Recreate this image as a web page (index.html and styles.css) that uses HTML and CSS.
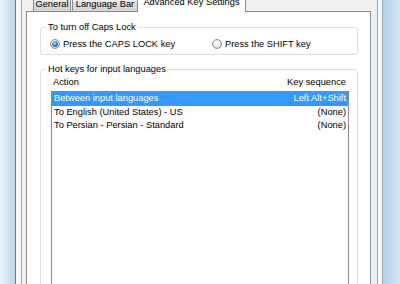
FILE: index.html
```html
<!DOCTYPE html>
<html lang="en">
<head>
  <meta charset="UTF-8">
  <meta name="viewport" content="width=device-width, initial-scale=1.0">
  <title>Text Services and Input Languages</title>
  <link rel="stylesheet" href="styles.css">
</head>
<body>
  <div class="desk-left"></div>
  <div class="window">
    <div class="dialog">
      <!-- Tabs -->
      <div class="tabs">
        <div class="tab tab-general">General</div>
        <div class="tab tab-lang">Language Bar</div>
        <div class="tab tab-active">Advanced Key Settings</div>
      </div>

      <div class="panel">
        <!-- Caps Lock -->
        <fieldset class="group">
          <legend>To turn off Caps Lock</legend>
          <div class="group-body caps">
            <label class="option"><span class="radio on"></span>Press the CAPS LOCK key</label>
            <label class="option"><span class="radio"></span>Press the SHIFT key</label>
          </div>
        </fieldset>

        <!-- Hot keys -->
        <fieldset class="group group-hotkeys">
          <legend>Hot keys for input languages</legend>
          <div class="group-body hotkeys">
            <div class="cols">
              <span>Action</span>
              <span>Key sequence</span>
            </div>
            <div class="listbox">
              <div class="row selected"><span>Between input languages</span><span>Left Alt+Shift</span></div>
              <div class="row"><span>To English (United States) - US</span><span>(None)</span></div>
              <div class="row"><span>To Persian - Persian - Standard</span><span>(None)</span></div>
            </div>
          </div>
        </fieldset>
      </div>
    </div>
  </div>
  <div class="desk-right"></div>
</body>
</html>
```

FILE: styles.css
```css
* {
  box-sizing: border-box;
}

html, body {
  margin: 0;
  padding: 0;
}

body {
  display: flex;
  height: 284px;
  overflow: hidden;
  font-family: "Liberation Sans", Arial, sans-serif;
  font-size: 9.3px;
  color: #000;
  background: #c4dcee;
}

.desk-left {
  width: 15px;
  flex: none;
  background: linear-gradient(to right, #edf4fa, #bad6ec);
}

.desk-right {
  flex: 1;
  background: linear-gradient(to right, #b2d0ea, #d4e7f5);
}

.window {
  width: 368px;
  flex: none;
  display: flex;
  padding: 0 4px 0 5px;
  background: #f6f7f8;
  border-left: 1px solid #71808e;
  border-right: 1px solid #9eabb6;
}

.dialog {
  flex: 1;
  background: #f0f0f0;
  border-left: 1px solid #a9a9a9;
  border-right: 1px solid #a9a9a9;
  padding: 0 6px 0 4px;
}

/* tabs */
.tabs {
  display: flex;
  align-items: flex-end;
  height: 18px;
  margin-top: -7px;
  padding-left: 7px;
}

.tab {
  height: 18px;
  padding-top: 4px;
  line-height: 13px;
  text-align: center;
  white-space: nowrap;
  border: 1px solid #898c95;
  border-bottom: none;
  background: linear-gradient(#f3f3f3, #ebebeb 50%, #dedede 50%, #d4d4d4);
}

.tab-general {
  width: 38px;
}

.tab-lang {
  width: 66px;
  margin-left: 1px;
}

.tab-active {
  position: relative;
  z-index: 1;
  width: 109px;
  height: 20px;
  padding-top: 3px;
  margin: 0 0 -1px -1px;
  background: #fff;
}

.panel {
  background: #fff;
  border: 1px solid #898c95;
  height: 300px;
  padding: 0 12px 0 13px;
}

/* group boxes */
.group {
  margin: 9px 0 0;
  padding: 0;
  min-width: 0;
  border: 1px solid #d5dfe5;
  border-radius: 3px;
}

.group legend {
  margin-left: 5px;
  padding: 0 2px;
  line-height: 12px;
}

.group-hotkeys {
  margin-top: 8px;
}

.caps {
  display: grid;
  grid-template-columns: 162px 1fr;
  padding: 5px 0 4px 9px;
}

.option {
  display: flex;
  align-items: center;
  gap: 3px;
  height: 12px;
  white-space: nowrap;
}

.radio {
  width: 10px;
  height: 10px;
  flex: none;
  display: flex;
  align-items: center;
  justify-content: center;
  border: 1px solid #8e8f8f;
  border-radius: 50%;
  background: radial-gradient(circle at 40% 35%, #fcfcfc, #e4e4e4 55%, #cbcbcb);
}

.radio.on::after {
  content: "";
  width: 6px;
  height: 6px;
  border-radius: 50%;
  background: radial-gradient(circle at 40% 35%, #a4e2ff, #2c87c9 50%, #16497e);
}

.hotkeys {
  padding: 1px 8px 0 10px;
}

.cols {
  display: flex;
  justify-content: space-between;
  line-height: 12px;
  padding: 0 3px 0 2px;
  margin-bottom: 3px;
}

.listbox {
  height: 210px;
  border: 1px solid #828790;
  background: #fff;
}

.row {
  display: flex;
  justify-content: space-between;
  height: 13.5px;
  line-height: 13.5px;
  padding: 0 2px;
  white-space: nowrap;
}

.row.selected {
  background: #3399ff;
  color: #fff;
}
```
